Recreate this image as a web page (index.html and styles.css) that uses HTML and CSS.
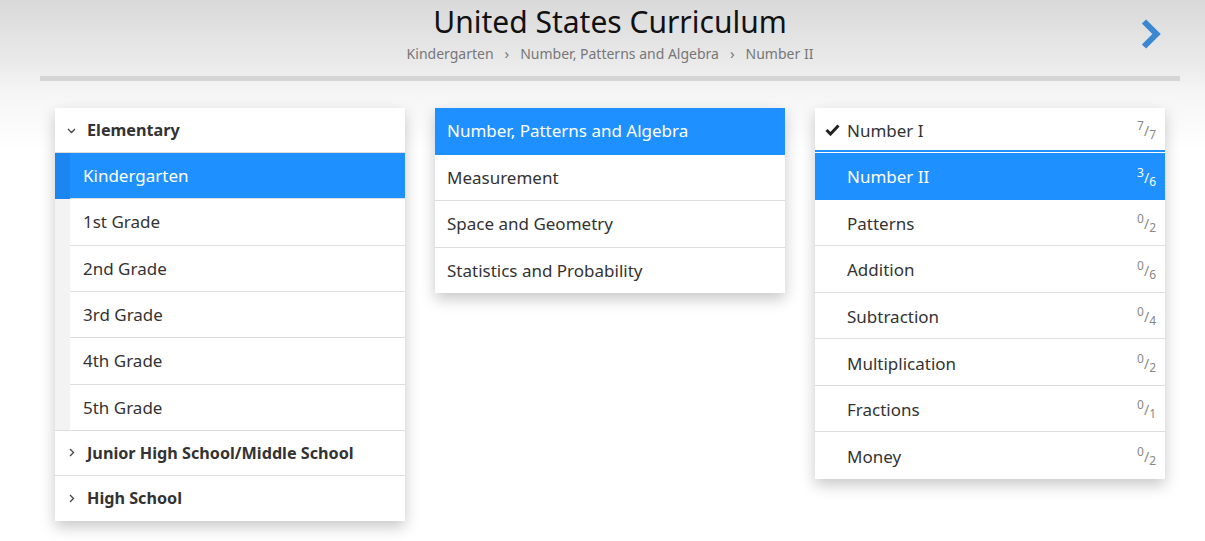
FILE: index.html
```html
<!DOCTYPE html>
<html lang="en">
<head>
  <meta charset="UTF-8">
  <title>United States Curriculum</title>
  <link rel="stylesheet" href="styles.css">
</head>
<body>
  <header class="top">
    <div class="top-inner">
      <div></div>
      <div class="title-block">
        <h1>United States Curriculum</h1>
        <div class="crumbs">
          <span>Kindergarten</span><span class="sep">&rsaquo;</span><span>Number, Patterns and Algebra</span><span class="sep">&rsaquo;</span><span>Number II</span>
        </div>
      </div>
      <a class="next-btn" href="#">
        <svg width="26" height="32" viewBox="0 0 26 32"><polyline points="5,3.5 17.5,16 5,28.5" fill="none" stroke="#3b87d1" stroke-width="6" stroke-linejoin="miter"/></svg>
      </a>
    </div>
    <div class="bar"></div>
  </header>

  <div class="columns">
    <div class="panel">
      <div class="group-head">
        <svg class="caret" width="9" height="9" viewBox="0 0 9 9"><polyline points="1,3 4.5,6.5 8,3" fill="none" stroke="#444" stroke-width="1.3"/></svg>
        Elementary
      </div>
      <div class="grade active">Kindergarten</div>
      <div class="grade">1st Grade</div>
      <div class="grade">2nd Grade</div>
      <div class="grade">3rd Grade</div>
      <div class="grade">4th Grade</div>
      <div class="grade last">5th Grade</div>
      <div class="group-head">
        <svg class="caret" width="9" height="9" viewBox="0 0 9 9"><polyline points="3,1 6.5,4.5 3,8" fill="none" stroke="#444" stroke-width="1.3"/></svg>
        Junior High School/Middle School
      </div>
      <div class="group-head no-border">
        <svg class="caret" width="9" height="9" viewBox="0 0 9 9"><polyline points="3,1 6.5,4.5 3,8" fill="none" stroke="#444" stroke-width="1.3"/></svg>
        High School
      </div>
    </div>

    <div class="panel">
      <div class="item active">Number, Patterns and Algebra</div>
      <div class="item">Measurement</div>
      <div class="item">Space and Geometry</div>
      <div class="item no-border">Statistics and Probability</div>
    </div>

    <div class="panel">
      <div class="skill done">
        <span class="check"><svg width="15" height="12" viewBox="0 0 15 12"><polyline points="1.5,6 5.5,10 13.5,1.5" fill="none" stroke="#222" stroke-width="3"/></svg></span>
        <span class="name">Number I</span><span class="count"><sup>7</sup>/<sub>7</sub></span>
      </div>
      <div class="skill active"><span class="check"></span><span class="name">Number II</span><span class="count"><sup>3</sup>/<sub>6</sub></span></div>
      <div class="skill"><span class="check"></span><span class="name">Patterns</span><span class="count"><sup>0</sup>/<sub>2</sub></span></div>
      <div class="skill"><span class="check"></span><span class="name">Addition</span><span class="count"><sup>0</sup>/<sub>6</sub></span></div>
      <div class="skill"><span class="check"></span><span class="name">Subtraction</span><span class="count"><sup>0</sup>/<sub>4</sub></span></div>
      <div class="skill"><span class="check"></span><span class="name">Multiplication</span><span class="count"><sup>0</sup>/<sub>2</sub></span></div>
      <div class="skill"><span class="check"></span><span class="name">Fractions</span><span class="count"><sup>0</sup>/<sub>1</sub></span></div>
      <div class="skill no-border"><span class="check"></span><span class="name">Money</span><span class="count"><sup>0</sup>/<sub>2</sub></span></div>
    </div>
  </div>
</body>
</html>
```

FILE: styles.css
```css
body {
  margin: 0;
  font-family: "Noto Sans", "Open Sans", sans-serif;
  color: #333;
  background: linear-gradient(#d9d9d9 0, #ececec 70px, #f5f5f5 90px, #fff 150px) no-repeat;
  min-height: 541px;
}
.top {
  padding: 0 25px 0 40px;
}
.top-inner {
  display: grid;
  grid-template-columns: 1fr auto 1fr;
  align-items: start;
}
.title-block {
  text-align: center;
}
h1 {
  margin: 0;
  padding-top: 3px;
  font-size: 30px;
  font-weight: normal;
  line-height: 38px;
  color: #111;
}
.crumbs {
  font-size: 14px;
  color: #777;
  line-height: 20px;
  margin-top: 2px;
}
.crumbs .sep {
  margin: 0 11px;
  font-size: 15px;
}
.next-btn {
  justify-self: end;
  margin: 18px 15px 0 0;
  display: block;
  width: 26px;
  height: 32px;
}
.bar {
  height: 5px;
  background: #d5d5d5;
  margin: 12px 0 0 0;
  width: 1140px;
}
.columns {
  display: flex;
  align-items: flex-start;
  gap: 30px;
  margin: 27px 0 0 55px;
}
.panel {
  width: 350px;
  background: #fff;
  box-shadow: 0 6px 14px rgba(0, 0, 0, 0.22);
}
.group-head {
  display: flex;
  align-items: center;
  height: 44px;
  padding-left: 12px;
  font-size: 16.2px;
  font-weight: bold;
  color: #333;
  border-bottom: 1px solid #ddd;
}
.group-head.no-border {
  height: 45px;
  border-bottom: none;
}
.caret {
  margin-right: 11px;
}
.grade {
  height: 45.33px;
  line-height: 45px;
  margin-left: 15px;
  padding-left: 13px;
  font-size: 17px;
  border-bottom: 1px solid #ddd;
  box-shadow: -15px 0 0 #f3f3f3;
}
.grade.last {
  border-bottom: none;
}
.grade.active {
  background: #1e90ff;
  color: #fff;
  box-shadow: -15px 0 0 #1c86f0;
}
.grade.last + .group-head {
  border-top: 1px solid #ddd;
}
.item {
  height: 45.6px;
  line-height: 45px;
  padding-left: 12px;
  font-size: 17px;
  border-bottom: 1px solid #ddd;
}
.item.active {
  background: #1e90ff;
  color: #fff;
  border-bottom-color: #1e90ff;
}
.item.no-border, .skill.no-border {
  border-bottom: none;
}
.skill {
  display: flex;
  align-items: center;
  box-sizing: border-box;
  height: 46.57px;
  padding: 2px 9px 0 10px;
  font-size: 17px;
  border-bottom: 1px solid #ddd;
}
.skill.no-border {
  height: 46.5px;
}
.skill.done {
  height: 44px;
  border-bottom: 2px solid #1e90ff;
  margin-bottom: 1px;
}
.skill.active {
  background: #1e90ff;
  color: #fff;
  border-bottom-color: #1e90ff;
}
.check {
  width: 22px;
  display: flex;
  align-items: center;
}
.name {
  flex: 1;
}
.count {
  font-size: 14px;
  color: #888;
}
.skill.active .count {
  color: #fff;
}
.count sup, .count sub {
  font-size: 12px;
}
```
